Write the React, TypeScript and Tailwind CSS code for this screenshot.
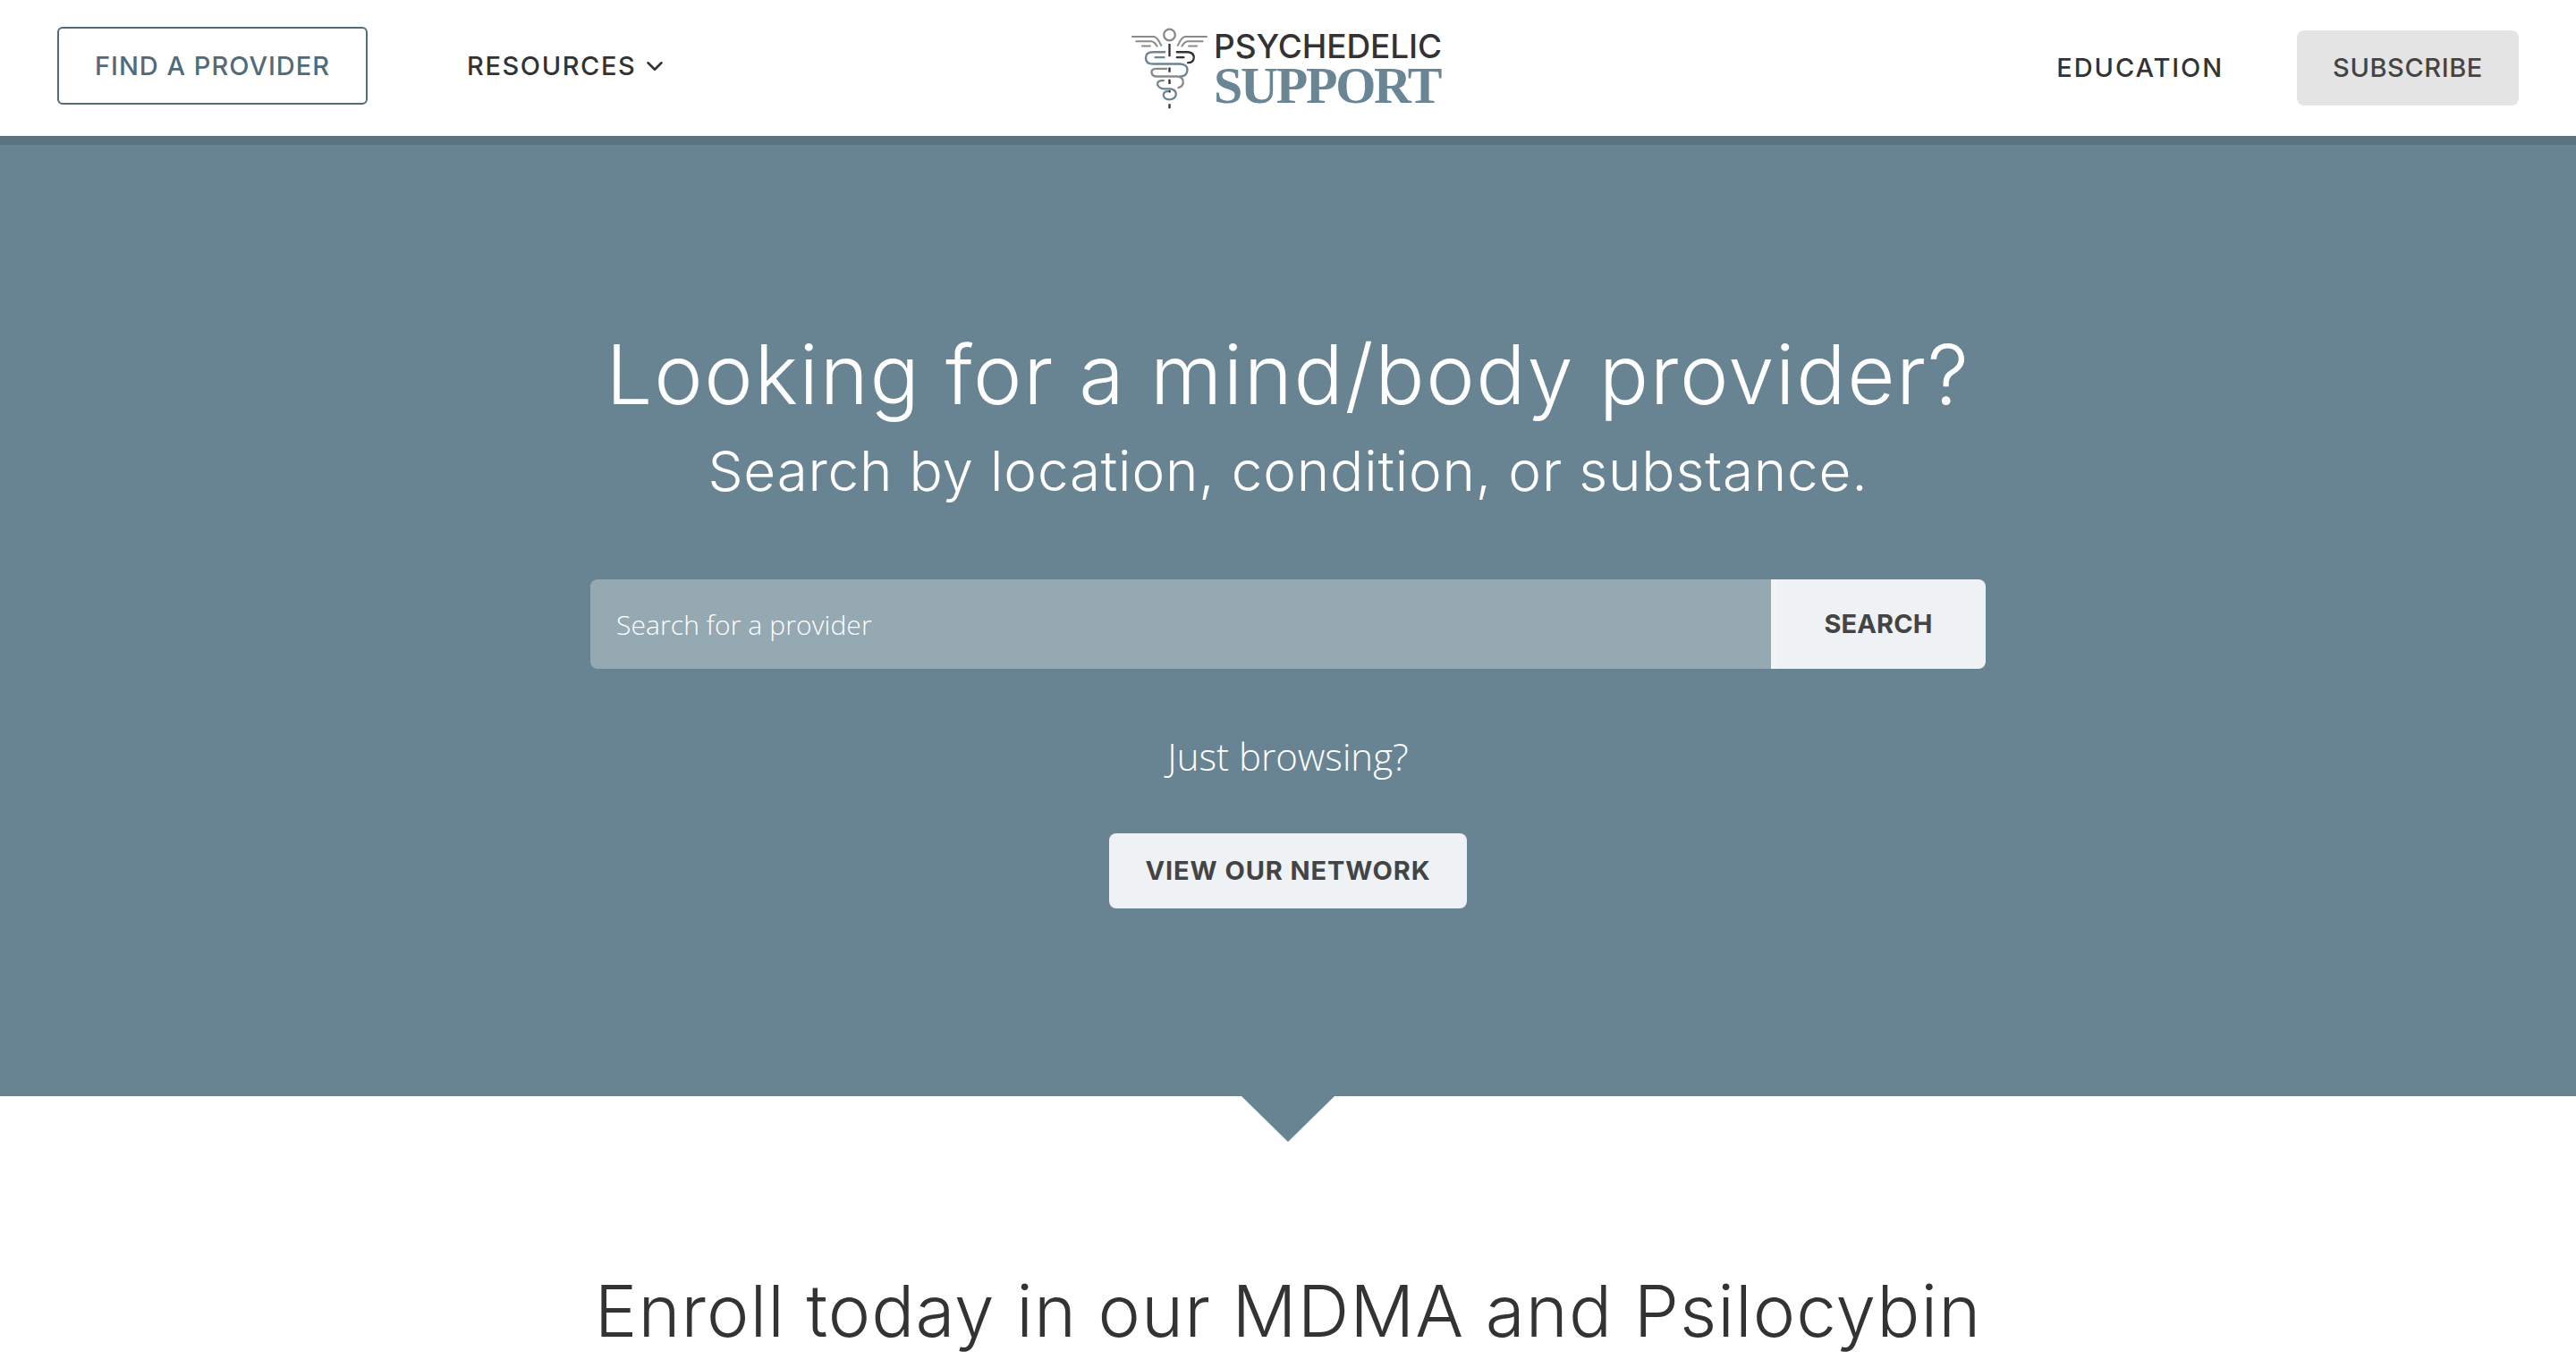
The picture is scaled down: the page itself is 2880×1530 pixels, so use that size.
import React from 'react';
import { ChevronDown } from 'lucide-react';

const heading = "font-['Inter','Liberation_Sans',sans-serif]";

const LogoMark = () => (
  <svg viewBox="60 50 280 290" className="w-[93px] h-[97px] shrink-0" fill="none" strokeWidth="7" strokeLinecap="round">
    <circle cx="200" cy="82" r="19" stroke="#8a8a8a" />
    <g stroke="#8a8a8a" strokeWidth="6">
      <path d="M75 88 H148 Q160 90 172 118" />
      <path d="M88 104 H140 Q150 106 158 120" />
      <path d="M108 120 H135" />
      <path d="M325 88 H252 Q240 90 228 118" />
      <path d="M312 104 H260 Q250 106 242 120" />
      <path d="M292 120 H265" />
    </g>
    <path d="M200 112 V155" stroke="#333" strokeLinecap="butt" />
    <path d="M200 192 V208 M200 232 V248 M200 268 V276 M200 315 V330" stroke="#333" strokeLinecap="butt" />
    <path d="M184 140 H145 Q120 140 120 160 Q120 180 145 180 H235 Q262 182 260 202 Q258 222 235 222" stroke="#6a8594" />
    <path d="M182 158 H152" stroke="#6a8594" />
    <path d="M225 158 H248 M225 140 H262 Q283 142 282 160 Q280 176 262 176" stroke="#333" />
    <path d="M190 196 H152 Q138 198 140 210 Q142 222 158 222 H226 Q248 224 246 244 Q244 256 230 260" stroke="#8a8a8a" />
    <path d="M180 236 H172 Q158 238 160 250 Q164 264 185 264 H204 Q224 268 222 284 Q218 300 198 300 Q178 298 180 282 Q182 272 194 272" stroke="#6a8594" />
  </svg>
);

export default function App() {
  return (
    <div className="h-screen overflow-hidden bg-white font-['Inter','Liberation_Sans',sans-serif] text-[#333]">
      <nav className="h-[152px] grid grid-cols-[1fr_auto_1fr] items-center px-[64px]">
        <div className="flex items-center gap-[111px] pb-[5px]">
          <a className="w-[347px] h-[87px] flex items-center justify-center border-2 border-[#536a79] rounded-[6px] text-[#536a79] text-[29px] font-medium tracking-[1px]">
            FIND A PROVIDER
          </a>
          <a className="flex items-center gap-[6px] text-[29px] font-medium tracking-[1.6px]">
            RESOURCES
            <ChevronDown size={30} strokeWidth={2} />
          </a>
        </div>
        <div className="flex items-center gap-[3px] -translate-x-[4px]">
          <LogoMark />
          <div className="flex flex-col w-[254px] mt-[10px]">
            <span className="text-[37px] leading-[30px] font-medium text-[#333] tracking-[-0.1px]">PSYCHEDELIC</span>
            <span className="font-['Liberation_Serif',serif] font-bold text-[58px] leading-[58px] text-[#6a8594] tracking-[-2.2px]">SUPPORT</span>
          </div>
        </div>
        <div className="flex items-center justify-end gap-[82px]">
          <a className="text-[29px] font-medium tracking-[1.9px]">EDUCATION</a>
          <a className="w-[248px] h-[84px] flex items-center justify-center bg-[#e4e4e4] rounded-[8px] text-[#444] text-[29px] font-medium tracking-[0.6px]">
            SUBSCRIBE
          </a>
        </div>
      </nav>

      <section className="relative h-[1074px] bg-[#688493] border-t-[10px] border-[#5e7380] flex flex-col items-center text-white">
        <h1 className={`${heading} text-[92px] leading-[110px] font-light mt-[202px] tracking-[1.6px]`}>
          Looking for a mind/body provider?
        </h1>
        <h2 className={`${heading} text-[62px] leading-[72px] font-light mt-[17px] tracking-[0.8px]`}>
          Search by location, condition, or substance.
        </h2>
        <div className="flex w-[1560px] h-[100px] mt-[85px]">
          <div className="flex-1 flex items-center bg-[#95a9b2] rounded-l-[8px] pl-[29px] font-['Open_Sans',sans-serif] font-light text-[30px] tracking-[0.1px]">
            Search for a provider
          </div>
          <button className="w-[240px] flex items-center justify-center bg-[#eef2f4] border-l-[6px] border-[#f2f5f6] pr-[6px] rounded-r-[8px] text-[#444] text-[29px] font-bold tracking-[0.1px]">
            SEARCH
          </button>
        </div>
        <p className="mt-[75px] font-['Open_Sans',sans-serif] font-light text-[42px] leading-[46px]">Just browsing?</p>
        <button className="mt-[63px] w-[400px] h-[84px] flex items-center justify-center bg-[#eef2f4] rounded-[8px] text-[#444] text-[29px] font-bold tracking-[0.9px]">
          VIEW OUR NETWORK
        </button>
        <div className="absolute top-full left-1/2 -translate-x-1/2 w-[104px] h-[51px] bg-[#688493] [clip-path:polygon(0_0,100%_0,50%_100%)]" />
      </section>

      <h2 className={`${heading} text-center text-[80px] leading-[96px] font-light text-[#333] mt-[192px] tracking-[1.05px]`}>
        Enroll today in our MDMA and Psilocybin
      </h2>
    </div>
  );
}
